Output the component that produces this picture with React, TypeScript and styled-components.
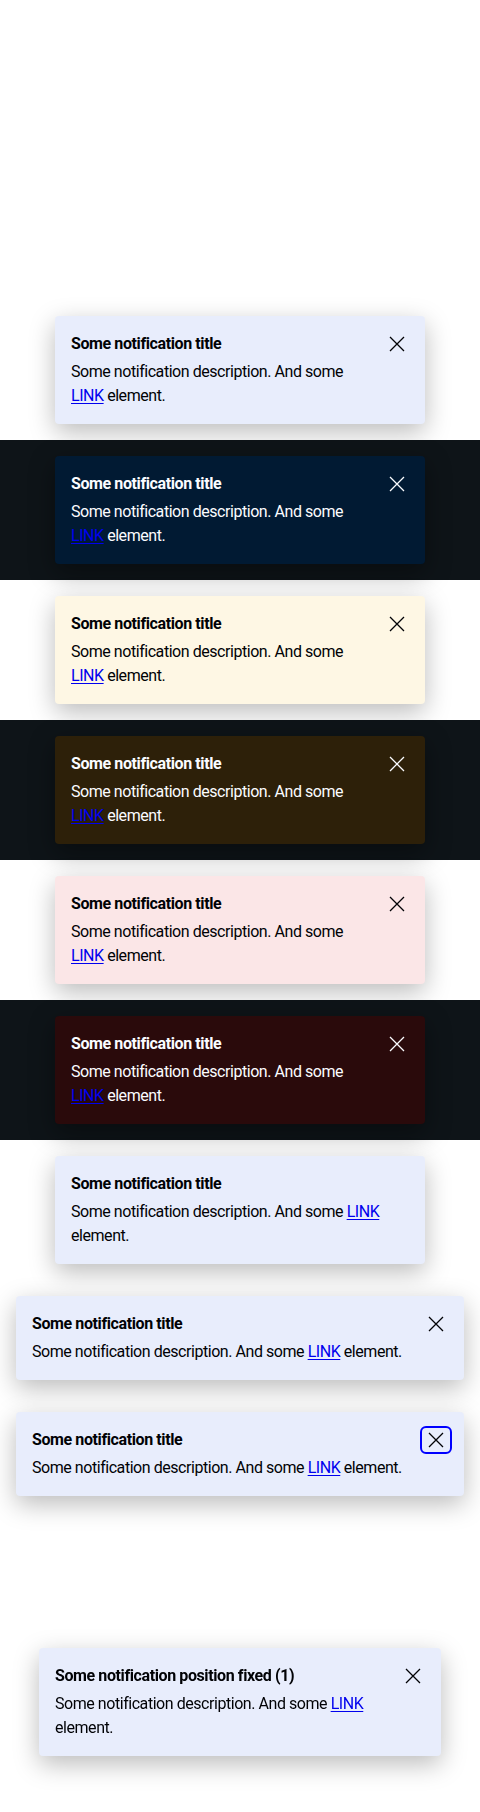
import React from "react";
import styled, { createGlobalStyle, css } from "styled-components";

const GlobalStyle = createGlobalStyle`
  html, body {
    margin: 0;
    padding: 0;
    background: #ffffff;
  }
  body {
    font-family: Roboto, "Liberation Sans", Arial, sans-serif;
    -webkit-font-smoothing: antialiased;
  }
`;

type Tone = "info" | "warning" | "error";
type Mode = "light" | "dark";

const palette: Record<Mode, { text: string; shadow: string } & Record<Tone, string>> = {
  light: {
    text: "#010205",
    info: "#e8edfc",
    warning: "#fef7e4",
    error: "#fbe6e7",
    shadow: "0 8px 26px rgba(0, 0, 0, 0.27)",
  },
  dark: {
    text: "#fbfcff",
    info: "#011a33",
    warning: "#2d2009",
    error: "#2a0a0b",
    shadow: "0 8px 26px rgba(0, 0, 0, 0.4)",
  },
};

const Page = styled.main`
  box-sizing: border-box;
  min-height: 100vh;
  display: flex;
  flex-direction: column;
  padding-top: 300px;
`;

const Section = styled.section<{ $mode: Mode }>`
  display: flex;
  justify-content: center;
  padding: 16px;
  background: ${(p) => (p.$mode === "dark" ? "#0e1418" : "transparent")};
`;

const Card = styled.div<{ $mode: Mode; $tone: Tone; $wide?: boolean; $closable: boolean }>`
  box-sizing: border-box;
  width: ${(p) => (p.$wide ? "100%" : "370px")};
  display: grid;
  grid-template-columns: ${(p) => (p.$closable ? "minmax(0, 1fr) auto" : "minmax(0, 1fr)")};
  column-gap: 12px;
  row-gap: 4px;
  padding: 16px;
  border-radius: 4px;
  background: ${(p) => palette[p.$mode][p.$tone]};
  color: ${(p) => palette[p.$mode].text};
  box-shadow: ${(p) => palette[p.$mode].shadow};
`;

const FixedCard = styled(Card)`
  position: fixed;
  left: 39px;
  right: 39px;
  bottom: 56px;
  width: auto;
`;

const Title = styled.h5`
  grid-column: 1;
  grid-row: 1;
  margin: 0;
  font-size: 16px;
  line-height: 24px;
  font-weight: 700;
  letter-spacing: -0.4px;
`;

const Description = styled.p`
  grid-column: 1;
  grid-row: 2;
  margin: 0;
  font-size: 16px;
  line-height: 24px;
  font-weight: 400;
  letter-spacing: -0.45px;
`;

const Link = styled.a`
  color: #0000ee;
  text-decoration: underline;
  text-underline-offset: 2px;
`;

const CloseButton = styled.button<{ $focused?: boolean }>`
  grid-column: 2;
  grid-row: 1;
  align-self: start;
  box-sizing: border-box;
  width: 28px;
  height: 24px;
  margin: 0 -2px;
  padding: 0;
  display: flex;
  align-items: center;
  justify-content: center;
  border: 0;
  border-radius: 4px;
  background: transparent;
  color: inherit;
  cursor: pointer;
  outline: none;
  ${(p) =>
    p.$focused &&
    css`
      outline: 2px solid #0000ff;
      outline-offset: 0;
    `}
`;

const CloseIcon = () => (
  <svg width="24" height="24" viewBox="0 0 24 24" aria-hidden="true">
    <path d="M5 5 L19 19 M19 5 L5 19" stroke="currentColor" strokeWidth="1.3" fill="none" />
  </svg>
);

type NotificationProps = {
  mode?: Mode;
  tone?: Tone;
  wide?: boolean;
  closable?: boolean;
  focused?: boolean;
  title?: string;
  fixed?: boolean;
};

const Notification = ({
  mode = "light",
  tone = "info",
  wide,
  closable = true,
  focused,
  title = "Some notification title",
  fixed,
}: NotificationProps) => {
  const Box = fixed ? FixedCard : Card;
  return (
    <Box $mode={mode} $tone={tone} $wide={wide} $closable={closable} role="status">
      <Title>{title}</Title>
      <Description>
        Some notification description. And some <Link href="#">LINK</Link> element.
      </Description>
      {closable && (
        <CloseButton $focused={focused} aria-label="Close notification">
          <CloseIcon />
        </CloseButton>
      )}
    </Box>
  );
};

const themed: { mode: Mode; tone: Tone }[] = [
  { mode: "light", tone: "info" },
  { mode: "dark", tone: "info" },
  { mode: "light", tone: "warning" },
  { mode: "dark", tone: "warning" },
  { mode: "light", tone: "error" },
  { mode: "dark", tone: "error" },
];

export default function App() {
  return (
    <>
      <GlobalStyle />
      <Page>
        {themed.map(({ mode, tone }) => (
          <Section key={`${mode}-${tone}`} $mode={mode}>
            <Notification mode={mode} tone={tone} />
          </Section>
        ))}
        <Section $mode="light">
          <Notification closable={false} />
        </Section>
        <Section $mode="light">
          <Notification wide />
        </Section>
        <Section $mode="light">
          <Notification wide focused />
        </Section>
      </Page>
      <Notification fixed title="Some notification position fixed (1)" />
    </>
  );
}
